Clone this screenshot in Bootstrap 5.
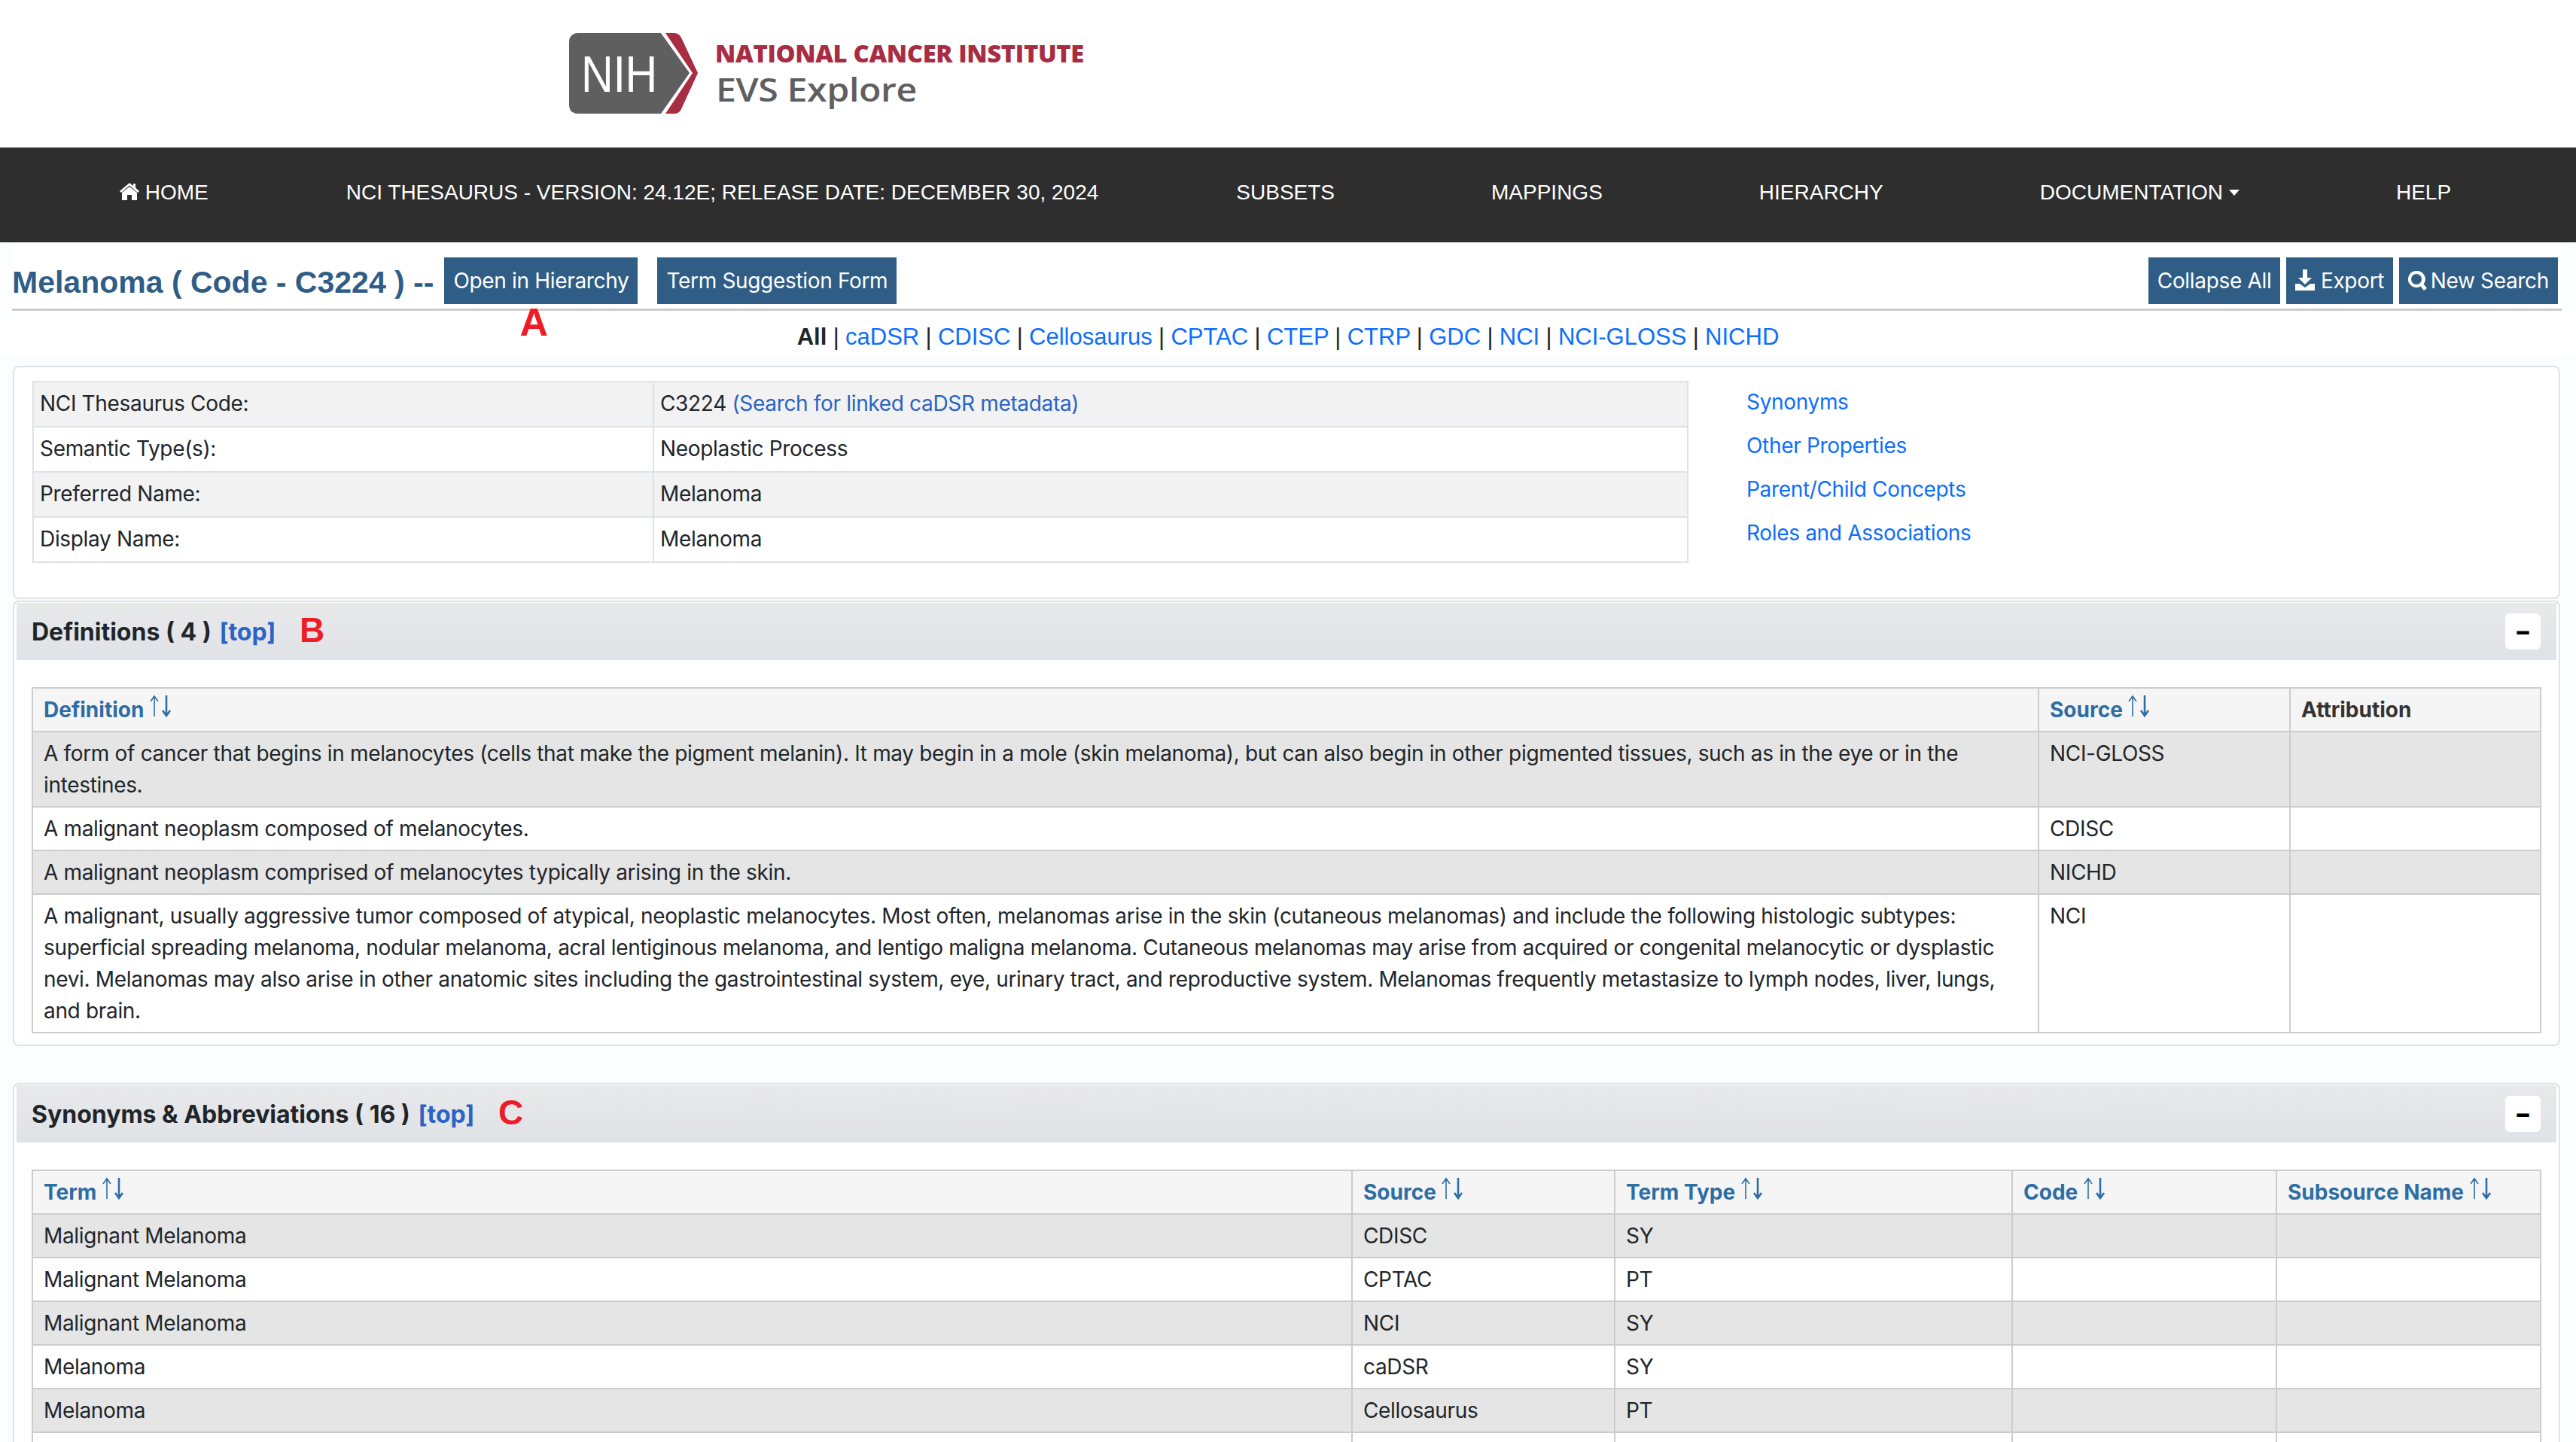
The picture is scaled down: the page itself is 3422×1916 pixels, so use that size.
<!DOCTYPE html>
<html lang="en">
<head>
  <meta charset="UTF-8">
  <title>EVS Explore - Melanoma</title>
  <link href="https://cdn.jsdelivr.net/npm/bootstrap@5.3.3/dist/css/bootstrap.min.css" rel="stylesheet">
  <style>
    html, body { height: 1916px; overflow: hidden; }
    body { font-family: Inter, "Liberation Sans", sans-serif; font-size: 28px; line-height: 42px; letter-spacing: -0.33px; color: #212529; background: #fcfdfe; }
    a { text-decoration: none; color: #0d6efd; }

    .site-top { background: #fff; height: 196px; padding: 44px 0 0 756px; }
    .site-top svg { display: block; }

    .main-nav { background: #2e2e2e; height: 126px; padding: 0 75px 6px 151px; font-family: "Liberation Sans", sans-serif; letter-spacing: 0; }
    .main-nav .navbar-nav { gap: 192px; }
    .main-nav .nav-link { color: #fff; padding: 0; font-size: 28px; line-height: 42px; white-space: nowrap; }
    .main-nav .short-gap { margin-right: -25px; }
    .main-nav .dropdown-toggle::after { vertical-align: 5px; border-width: 8px 7px 0; margin-left: 8px; }
    .home-ico { width: 26px; height: 24px; vertical-align: -2px; fill: #fff; }

    .title-bar { background: #fff; margin: 0 19px 0 16px; padding: 20px 5px 6px 0; border-bottom: 3px solid #ccc; }
    .title-bar h1 { font-size: 41px; line-height: 62px; color: #2f5d86; margin: 2px 14px -2px 0; font-family: "Liberation Sans", sans-serif; font-weight: 700; letter-spacing: 0; white-space: nowrap; }
    .btn-nci { background: #2f5d86; color: #fff; border: 0; border-radius: 0; height: 62px; padding: 0 12px; font-size: 28px; line-height: 62px; letter-spacing: -0.33px; }
    .btn-nci svg { width: 26px; height: 28px; fill: #fff; vertical-align: -3px; }
    .btn-nci .search-ico { margin-right: -4px; }
    .note-wrap { position: relative; margin-right: 26px; }
    .red-note { color: #ee1c25; font-family: "Liberation Sans", sans-serif; font-weight: 700; font-size: 52px; line-height: 52px; letter-spacing: 0; }
    .note-a { position: absolute; left: 100px; top: 60px; }

    .source-links { background: #fff; font-size: 31px; line-height: 48px; height: 61px; padding-top: 11px; font-family: "Liberation Sans", sans-serif; letter-spacing: 0; word-spacing: -0.3px; }

    .panel-box { margin: 0 21px 0 17px; border: 2px solid #dfe2e6; border-radius: 8px; background: #fff; padding: 1px; }
    .panel-first { padding: 18px 24px; height: 310px; gap: 77px; margin-top: 12px; }
    .panel-defs { margin-top: 2px; height: 592px; }
    .panel-syn { margin-top: 49px; }
    .panel-head { height: 76px; margin: 0 2px; padding: 0 21px 0 20px; background: linear-gradient(#e9e9eb, #dfe2e6); }
    .panel-head h2 { font-size: 32px; line-height: 48px; font-weight: 700; margin: 0; letter-spacing: 0; }
    .panel-head a { color: #2b63c6; margin-left: 3px; }
    .panel-head .red-note { margin-left: 24px; font-size: 46px; line-height: 46px; vertical-align: -2px; }
    .minus-btn { width: 47px; height: 48px; padding: 0; border: 0; border-radius: 6px; background: #fff; color: #000; font-weight: 800; font-size: 32px; line-height: 44px; }
    .panel-body-pad { padding: 36px 22px 0; }

    .info-tbl { width: 2200px; flex: none; table-layout: fixed; margin: 0; --bs-table-striped-bg: #f2f2f2; --bs-table-striped-color: #212529; --bs-table-border-color: #dfe2e6; border-color: #dfe2e6; }
    .info-tbl > :not(caption) > * > * { padding: 7px 8px 9px; border-width: 2px; }
    .info-tbl a { color: #2b63c6; }
    .w-label { width: 824px; }
    .side-links a { display: block; margin: 7px 0 16px; }

    .data-tbl { width: 100%; table-layout: fixed; margin: 0; --bs-table-striped-bg: #e5e5e5; --bs-table-striped-color: #212529; --bs-table-border-color: #ccc; border-color: #ccc; }
    .data-tbl > :not(caption) > * > * { padding: 7px 14px; border-width: 2px; }
    .data-tbl th { background: #f5f5f6; font-weight: 700; color: #333; letter-spacing: 0; }
    .data-tbl th a { color: #2e6da4; }
    .sort-ico { width: 30px; height: 30px; vertical-align: 0; fill: none; stroke: #2e6da4; }
    .c-src { width: 334px; }
    .c-attr { width: 333px; }
    .s-term { width: 1753px; }
    .s-src { width: 349px; }
    .s-type { width: 528px; }
    .s-code { width: 351px; }
  </style>
</head>
<body>
  <svg width="0" height="0" class="d-block">
    <symbol id="sort" viewBox="0 0 30 30">
      <path d="M7 29V2M2 9l5-7 5 7" stroke-width="1.6"/>
      <path d="M23 1v27M18 21l5 7 5-7" stroke-width="2.6"/>
    </symbol>
  </svg>

  <div class="site-top">
    <svg width="700" height="110" viewBox="0 0 700 110">
      <path d="M12 0H122L160 53 122 107H12Q0 107 0 95V12Q0 0 12 0Z" fill="#5f5f5f"/>
      <path d="M128 0h12q6 0 9 6l22 47-22 48q-3 6-9 6h-12l36-54Z" fill="#a82d42"/>
      <text x="16" y="78" fill="#fff" font-family="Liberation Sans" font-size="68" textLength="101" lengthAdjust="spacingAndGlyphs">NIH</text>
      <text x="194" y="39" fill="#a82d42" font-family="Open Sans" font-weight="800" font-size="31" textLength="490" lengthAdjust="spacingAndGlyphs">NATIONAL CANCER INSTITUTE</text>
      <text x="195" y="91" fill="#5f5f5f" font-family="Open Sans" font-weight="600" font-size="43" textLength="267" lengthAdjust="spacingAndGlyphs">EVS Explore</text>
    </svg>
  </div>

  <nav class="navbar navbar-expand main-nav">
    <ul class="navbar-nav">
      <li class="nav-item short-gap"><a class="nav-link" href="#"><svg class="home-ico" viewBox="0 0 26 24"><path d="M13 5 3 13v10h7v-7h6v7h7V13ZM13 0 0 11l2 2L13 3.500 24 13l2-2-5-4.400V1h-3v3Z"/></svg> HOME</a></li>
      <li class="nav-item short-gap"><a class="nav-link" href="#">NCI THESAURUS - VERSION: 24.12E; RELEASE DATE: DECEMBER 30, 2024</a></li>
      <li class="nav-item"><a class="nav-link" href="#">SUBSETS</a></li>
      <li class="nav-item"><a class="nav-link" href="#">MAPPINGS</a></li>
      <li class="nav-item"><a class="nav-link" href="#">HIERARCHY</a></li>
      <li class="nav-item dropdown"><a class="nav-link dropdown-toggle" href="#">DOCUMENTATION</a></li>
      <li class="nav-item"><a class="nav-link" href="#">HELP</a></li>
    </ul>
  </nav>

  <div class="title-bar d-flex justify-content-between align-items-center">
    <div class="d-flex align-items-center">
      <h1>Melanoma ( Code - C3224 ) --</h1>
      <div class="note-wrap">
        <button class="btn btn-nci">Open in Hierarchy</button>
        <span class="red-note note-a">A</span>
      </div>
      <button class="btn btn-nci">Term Suggestion Form</button>
    </div>
    <div class="d-flex gap-2">
      <button class="btn btn-nci">Collapse All</button>
      <button class="btn btn-nci"><svg viewBox="0 0 26 28"><path d="M10 0h6v11h6L13 20 4 11h6ZM0 19h6l7 5 7-5h6v9H0Z"/></svg> Export</button>
      <button class="btn btn-nci"><svg class="search-ico" viewBox="0 0 26 28"><path fill-rule="evenodd" d="M11 2a11 11 0 1 0 5.600 20.400L21 28l4-3-4.400-5.400A11 11 0 0 0 11 2Zm0 4a7 7 0 1 1 0 14 7 7 0 0 1 0-14Z"/></svg> New Search</button>
    </div>
  </div>

  <div class="source-links text-center">
    <b>All</b> | <a href="#">caDSR</a> | <a href="#">CDISC</a> | <a href="#">Cellosaurus</a> | <a href="#">CPTAC</a> | <a href="#">CTEP</a> | <a href="#">CTRP</a> | <a href="#">GDC</a> | <a href="#">NCI</a> | <a href="#">NCI-GLOSS</a> | <a href="#">NICHD</a>
  </div>

  <div class="panel-box panel-first d-flex align-items-start">
    <table class="table table-bordered table-striped info-tbl">
      <colgroup><col class="w-label"><col></colgroup>
      <tbody>
        <tr><td>NCI Thesaurus Code:</td><td>C3224 <a href="#">(Search for linked caDSR metadata)</a></td></tr>
        <tr><td>Semantic Type(s):</td><td>Neoplastic Process</td></tr>
        <tr><td>Preferred Name:</td><td>Melanoma</td></tr>
        <tr><td>Display Name:</td><td>Melanoma</td></tr>
      </tbody>
    </table>
    <div class="side-links">
      <a href="#">Synonyms</a>
      <a href="#">Other Properties</a>
      <a href="#">Parent/Child Concepts</a>
      <a href="#">Roles and Associations</a>
    </div>
  </div>

  <div class="panel-box panel-defs">
    <div class="panel-head d-flex justify-content-between align-items-center">
      <h2>Definitions ( 4 ) <a href="#">[top]</a> <span class="red-note">B</span></h2>
      <button class="minus-btn">−</button>
    </div>
    <div class="panel-body-pad">
      <table class="table table-bordered table-striped data-tbl">
        <colgroup><col><col class="c-src"><col class="c-attr"></colgroup>
        <thead>
          <tr>
            <th><a href="#">Definition <svg class="sort-ico"><use href="#sort"/></svg></a></th>
            <th><a href="#">Source <svg class="sort-ico"><use href="#sort"/></svg></a></th>
            <th>Attribution</th>
          </tr>
        </thead>
        <tbody>
          <tr><td>A form of cancer that begins in melanocytes (cells that make the pigment melanin). It may begin in a mole (skin melanoma), but can also begin in other pigmented tissues, such as in the eye or in the intestines.</td><td>NCI-GLOSS</td><td></td></tr>
          <tr><td>A malignant neoplasm composed of melanocytes.</td><td>CDISC</td><td></td></tr>
          <tr><td>A malignant neoplasm comprised of melanocytes typically arising in the skin.</td><td>NICHD</td><td></td></tr>
          <tr><td>A malignant, usually aggressive tumor composed of atypical, neoplastic melanocytes. Most often, melanomas arise in the skin (cutaneous melanomas) and include the following histologic subtypes: superficial spreading melanoma, nodular melanoma, acral lentiginous melanoma, and lentigo maligna melanoma. Cutaneous melanomas may arise from acquired or congenital melanocytic or dysplastic nevi. Melanomas may also arise in other anatomic sites including the gastrointestinal system, eye, urinary tract, and reproductive system. Melanomas frequently metastasize to lymph nodes, liver, lungs, and brain.</td><td>NCI</td><td></td></tr>
        </tbody>
      </table>
    </div>
  </div>

  <div class="panel-box panel-syn">
    <div class="panel-head d-flex justify-content-between align-items-center">
      <h2>Synonyms &amp; Abbreviations ( 16 ) <a href="#">[top]</a> <span class="red-note">C</span></h2>
      <button class="minus-btn">−</button>
    </div>
    <div class="panel-body-pad">
      <table class="table table-bordered table-striped data-tbl">
        <colgroup><col class="s-term"><col class="s-src"><col class="s-type"><col class="s-code"><col></colgroup>
        <thead>
          <tr>
            <th><a href="#">Term <svg class="sort-ico"><use href="#sort"/></svg></a></th>
            <th><a href="#">Source <svg class="sort-ico"><use href="#sort"/></svg></a></th>
            <th><a href="#">Term Type <svg class="sort-ico"><use href="#sort"/></svg></a></th>
            <th><a href="#">Code <svg class="sort-ico"><use href="#sort"/></svg></a></th>
            <th><a href="#">Subsource Name <svg class="sort-ico"><use href="#sort"/></svg></a></th>
          </tr>
        </thead>
        <tbody>
          <tr><td>Malignant Melanoma</td><td>CDISC</td><td>SY</td><td></td><td></td></tr>
          <tr><td>Malignant Melanoma</td><td>CPTAC</td><td>PT</td><td></td><td></td></tr>
          <tr><td>Malignant Melanoma</td><td>NCI</td><td>SY</td><td></td><td></td></tr>
          <tr><td>Melanoma</td><td>caDSR</td><td>SY</td><td></td><td></td></tr>
          <tr><td>Melanoma</td><td>Cellosaurus</td><td>PT</td><td></td><td></td></tr>
          <tr><td>&nbsp;</td><td></td><td></td><td></td><td></td></tr>
        </tbody>
      </table>
    </div>
  </div>

  <script src="https://cdn.jsdelivr.net/npm/bootstrap@5.3.3/dist/js/bootstrap.bundle.min.js"></script>
</body>
</html>
